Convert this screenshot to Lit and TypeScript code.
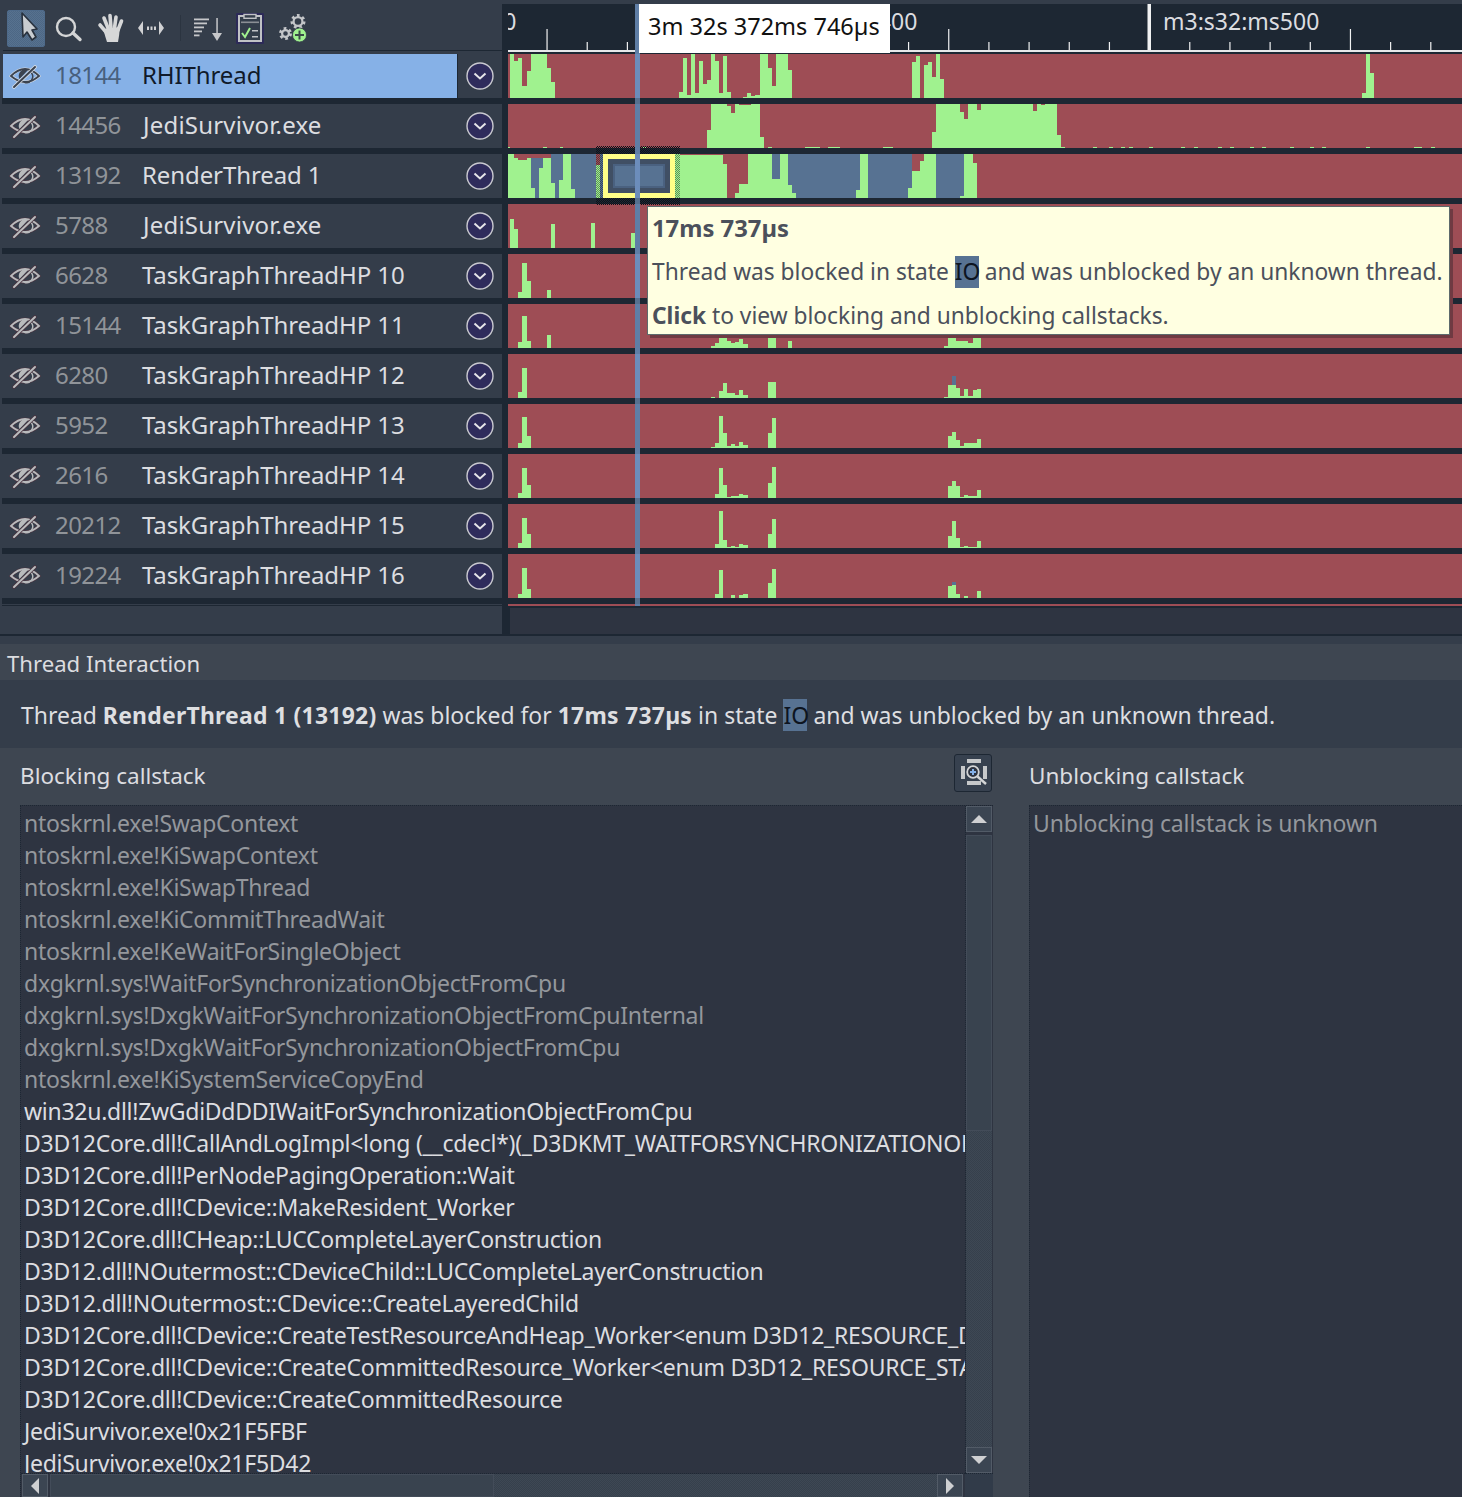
import { LitElement, html, css, svg } from "lit";
import { customElement } from "lit/decorators.js";

const GREEN = "#a0f28f";
const BLUE = "#577292";

// Columns traced from the reference, in 3x-zoom x units: [x0, x1, green, blue?]
type Col = [number, number, number, number?];
const TRACKS: Col[][] = [
  [[30,42,44],[42,54,37],[54,66,40],[66,81,12],[81,93,27],[93,141,44],[141,153,30],[153,165,16],
   [537,549,6],[549,561,40],[561,573,3],[573,585,44],[585,597,5],[597,609,37],[609,621,14],[621,633,18],[633,645,44],[645,657,37],[657,669,5],[669,681,42],[681,693,6],
   [729,741,1],[741,753,5],[753,765,2],[765,780,3],[780,804,44],[804,816,30],[816,828,12],[828,864,44],[864,876,28],
   [1236,1248,36],[1248,1260,42],[1272,1284,33],[1284,1296,36],[1296,1308,21],[1308,1320,44],[1320,1332,19],
   [2586,2598,5],[2598,2610,44],[2610,2622,25]],
  [[24,30,1],[130,140,1],[180,190,1],[425,440,1],[621,633,18],[633,681,44],[681,693,42],[693,705,35],[705,717,44],[717,753,43],[753,780,44],[780,792,11],[805,815,1],[915,960,1],[985,1020,1],[1150,1180,1],
   [1296,1308,16],[1308,1380,44],[1380,1392,36],[1392,1404,29],[1404,1431,44],[1431,1443,38],[1443,1599,44],[1599,1611,37],[1611,1623,44],[1623,1635,43],[1635,1671,44],[1671,1683,13],[1683,1695,1],
   [1779,1791,1],[1827,1839,1],[1863,1875,1],[1887,1899,1],[1947,1959,1],[2043,2055,1],[2082,2094,1],[2154,2166,1],[2190,2202,1],[2250,2262,1],[2286,2298,1],[2370,2382,1],[2430,2442,1],[2466,2478,1],[2598,2610,1],[2742,2766,1],[2793,2805,1]],
  [[24,42,44],[42,54,40],[54,81,38],[81,93,40],[93,105,10,30],[105,117,0,40],[117,129,30,10],[129,153,40],[153,165,15,29],[165,177,0,44],[177,189,18,26],[189,213,44],[213,225,9,35],[225,288,0,44],
   [288,300,33],[300,525,0,44],[525,540,44],[540,669,43],[669,681,34],[705,717,5],[717,744,14],[744,816,44],[816,840,19,25],[840,864,44],[864,876,13,31],[876,888,5,39],[888,1068,0,44],[1068,1080,8,36],[1080,1104,44],[1104,1224,0,44],[1224,1236,10,34],[1236,1260,27],[1260,1272,37],[1272,1308,44],[1308,1380,0,44],[1380,1392,2,42],[1392,1419,44],[1419,1431,35]],
  [[30,42,29],[42,54,19],[153,165,24],[273,285,25],[393,405,15]],
  [[54,66,6],[66,81,35],[81,93,17],[141,153,8]],
  [[54,66,6],[66,81,32],[81,93,7],[141,153,13],[633,645,2],[645,657,5],[657,681,11],[681,693,7],[693,705,5],[705,717,6],[717,729,9],[729,744,4],[804,828,11],[864,876,7],[1332,1344,2],[1344,1368,11],[1368,1392,7],[1392,1404,7],[1404,1419,5],[1419,1443,10]],
  [[54,66,6],[66,81,30],[633,645,1],[657,669,7],[669,681,15],[681,693,5],[693,705,5],[705,717,3],[717,729,8],[729,744,3],[804,828,16],[1332,1344,1],[1344,1356,13],[1356,1368,13,9],[1368,1380,10],[1380,1392,2],[1392,1404,9],[1404,1419,2],[1419,1431,8],[1431,1443,9]],
  [[54,66,5],[66,81,31],[81,93,12],[633,645,1],[645,657,5],[657,669,32],[669,681,15],[681,693,2],[693,705,4],[705,717,2],[717,729,6],[729,744,3],[804,816,15],[816,828,30],[1344,1356,12],[1356,1368,16],[1368,1380,8],[1380,1392,2],[1392,1431,5],[1431,1443,9]],
  [[54,66,5],[66,81,30],[81,93,13],[645,657,4],[657,669,30],[669,681,13],[681,693,1],[693,717,2],[717,729,4],[729,744,3],[804,816,15],[816,828,31],[1344,1356,12],[1356,1368,17],[1368,1380,12],[1380,1392,1],[1392,1404,3],[1404,1431,2],[1431,1443,8]],
  [[54,66,5],[66,81,30],[81,93,14],[645,657,4],[657,669,37],[669,681,8],[681,693,1],[693,705,2],[705,717,1],[717,729,4],[729,744,3],[804,816,14],[816,828,29],[1344,1356,12],[1356,1368,27],[1368,1380,10],[1380,1392,1],[1392,1404,2],[1404,1431,1],[1431,1443,7]],
  [[54,66,4],[66,81,30],[81,93,9],[645,657,4],[657,669,28],[693,705,3],[717,729,3],[729,744,4],[804,816,15],[816,828,29],[1344,1356,12],[1356,1368,13,3],[1368,1380,4],[1392,1404,2],[1431,1443,7]],
];

const THREADS: [string, string][] = [
  ["18144","RHIThread"],["14456","JediSurvivor.exe"],["13192","RenderThread 1"],["5788","JediSurvivor.exe"],
  ["6628","TaskGraphThreadHP 10"],["15144","TaskGraphThreadHP 11"],["6280","TaskGraphThreadHP 12"],["5952","TaskGraphThreadHP 13"],
  ["2616","TaskGraphThreadHP 14"],["20212","TaskGraphThreadHP 15"],["19224","TaskGraphThreadHP 16"],
];

const STACK = [
  "ntoskrnl.exe!SwapContext","ntoskrnl.exe!KiSwapContext","ntoskrnl.exe!KiSwapThread","ntoskrnl.exe!KiCommitThreadWait","ntoskrnl.exe!KeWaitForSingleObject",
  "dxgkrnl.sys!WaitForSynchronizationObjectFromCpu","dxgkrnl.sys!DxgkWaitForSynchronizationObjectFromCpuInternal","dxgkrnl.sys!DxgkWaitForSynchronizationObjectFromCpu","ntoskrnl.exe!KiSystemServiceCopyEnd",
  "win32u.dll!ZwGdiDdDDIWaitForSynchronizationObjectFromCpu",
  "D3D12Core.dll!CallAndLogImpl<long (__cdecl*)(_D3DKMT_WAITFORSYNCHRONIZATIONOBJECTFROMCPU)>",
  "D3D12Core.dll!PerNodePagingOperation::Wait","D3D12Core.dll!CDevice::MakeResident_Worker","D3D12Core.dll!CHeap::LUCCompleteLayerConstruction",
  "D3D12.dll!NOutermost::CDeviceChild::LUCCompleteLayerConstruction","D3D12.dll!NOutermost::CDevice::CreateLayeredChild",
  "D3D12Core.dll!CDevice::CreateTestResourceAndHeap_Worker<enum D3D12_RESOURCE_DIMENSION>",
  "D3D12Core.dll!CDevice::CreateCommittedResource_Worker<enum D3D12_RESOURCE_STATES>",
  "D3D12Core.dll!CDevice::CreateCommittedResource","JediSurvivor.exe!0x21F5FBF","JediSurvivor.exe!0x21F5D42",
];

const icon = (x0: number, w: number, body: unknown) => html`<svg class="ico" width=${w} height="50" viewBox="${x0} 0 ${w} 50">${body}</svg>`;

const gear = (cx: number, cy: number, r: number) => svg`
  <circle cx=${cx} cy=${cy} r=${r} fill="none" stroke="#c4c6c9" stroke-width="3" stroke-dasharray="2.6 2.7"/>
  <circle cx=${cx} cy=${cy} r=${r - 1.6} fill="none" stroke="#c4c6c9" stroke-width="2.2"/>`;

const eye = (sel: boolean) => {
  const c = sel ? "#3b4350" : "#b9bbbd";
  const halo = sel ? "#d8dde4" : "#4a3440";
  return html`<svg class="eye" width="32" height="28" viewBox="9 112 32 28">
    <path d="M11 126 Q25 112 39 126 Q25 138 11 126Z" fill="none" stroke=${halo} stroke-width="3"/>
    <path d="M11 126 Q25 112 39 126 Q25 138 11 126Z" fill="none" stroke=${c} stroke-width="1.8"/>
    <path d="M19.500 129 A7 7 0 0 1 28.500 119.500Z" fill=${c}/>
    <path d="M31 122.500 A6 6 0 0 1 24 132" fill="none" stroke=${c} stroke-width="1.500"/>
    <line x1="14" y1="137" x2="35" y2="117" stroke=${halo} stroke-width="3.600" stroke-linecap="round"/>
    <line x1="14" y1="137" x2="35" y2="117" stroke=${c} stroke-width="2" stroke-linecap="round"/>
  </svg>`;
};

const chevron = html`<svg class="chev" width="28" height="28" viewBox="0 0 28 28">
  <circle cx="14" cy="14" r="13" fill="#2f2c5c" stroke="#c9c9d0" stroke-width="1.4"/>
  <path d="M8.500 11.500 L14 16.500 L19.500 11.500" fill="none" stroke="#e6e6ea" stroke-width="2"/>
</svg>`;

const TICKS = Array.from({ length: 28 }, (_, i) => i);

@customElement("app-root")
export class AppRoot extends LitElement {
  static styles = css`
    :host { display: block; width: 1462px; height: 1497px; overflow: hidden; background: #343d4a;
      font-family: "Noto Sans", "Open Sans", sans-serif; color: #dedfe1; }
    * { box-sizing: border-box; }
    .top { position: relative; display: grid; grid-template-columns: 502px 960px; height: 634px; }
    .side { display: flex; flex-direction: column; padding-left: 2px; }
    .toolbar { display: flex; align-items: center; height: 51px; border-bottom: 1px solid #1d2733; margin-bottom: 3px; margin-left: 1px; padding-left: 4px; }
    .ico { display: block; flex: none; }
    .tool-on { width: 38px; height: 37px; flex: none; border: 1px solid #4e6a8a; border-radius: 2px;
      background: repeating-conic-gradient(#4d6785 0 25%, #57728f 0 50%) 0 0 / 2px 2px; display: flex; margin-top: 7px; }
    .rows { display: flex; flex-direction: column; }
    .row { height: 50px; border-bottom: 6px solid #1d2733; display: flex; align-items: center; background: #343d4a; }
    .main { display: flex; align-items: center; width: 455px; height: 44px; flex: none; font-size: 24px; }
    .row.sel .main { background: #86b1e7; margin-left: 1px; width: 454px; }
    .eyebox { width: 54px; padding-left: 7px; display: flex; flex: none; }
    .row.sel .eyebox { padding-left: 6px; width: 53px; }
    .eye { display: block; }
    .pid { width: 86px; flex: none; color: #909499; letter-spacing: -0.6px; margin-top: -4px; margin-left: -1px; margin-right: 1px; }
    .name { white-space: nowrap; color: #dcdde0; letter-spacing: -0.1px; margin-top: -4px; }
    .name.jedi { letter-spacing: 0.2px; margin-left: 1px; }
    .row.sel .pid { color: #48607e; }
    .row.sel .name { color: #101a2a; }
    .chevbox { flex: 1; display: flex; justify-content: center; padding-right: 1px; border-left: 1px solid transparent; }
    .row.sel .chevbox { border-left-color: #1d2733; height: 44px; align-items: center; }
    .chev { display: block; }
    .sidefoot { flex: 1; border-top: 1px solid #1d2733; margin-top: 1px; }
    .time { background: #1d2733; margin-top: 4px; padding-left: 6px; display: flex; flex-direction: column; height: 630px; }
    .ruler { position: relative; height: 48px; margin-bottom: 2px; overflow: hidden; border-bottom: 2px solid #e6e8ea; flex: none; }
    .ruler svg { display: block; position: absolute; left: 0; top: 0; }
    .rlabel { position: absolute; top: 0; line-height: 35px; font-size: 23px; color: #dcdde0; white-space: nowrap; }
    .tracks { display: flex; flex-direction: column; gap: 6px; }
    .track { display: block; background: #9e4d55; }
    .sliver { height: 2px; margin-top: 6px; background: #9e4d55; flex: none; }
    .tscroll { flex: 1; margin: 2px 0 0 2px; background: #2e3441; }
    .cursor { position: absolute; left: 635px; top: 4px; width: 5px; height: 602px;
      background: repeating-linear-gradient(#5f7ea6 0 50px, #6c8dbb 50px 94px, #56708f 94px 100px); }
    .selbox { position: absolute; left: 603px; top: 154px; width: 72px; height: 44px; border: 5px solid #ffff88;
      box-shadow: inset 0 0 0 5px #404f64, inset 0 0 0 7px #4a6180; }
    .dith { position: absolute; background: repeating-conic-gradient(#0c121a 0 25%, transparent 0 50%) 0 0 / 2px 2px; }
    .d1 { left: 596px; top: 146px; width: 84px; height: 8px; }
    .d2 { left: 596px; top: 198px; width: 84px; height: 7px; }
    .d3 { left: 596px; top: 154px; width: 7px; height: 44px; opacity: .45; }
    .d4 { left: 675px; top: 154px; width: 5px; height: 44px; opacity: .45; }
    .stamp { position: absolute; left: 639px; top: 4px; width: 251px; height: 49px; background: #fff; color: #111; font-size: 23.5px;
      line-height: 45px; padding-left: 9px; white-space: nowrap; }
    .tip { position: absolute; left: 647px; top: 206px; width: 803px; height: 129px; background: #ffffe1; border: 1px solid #5d6a6c;
      box-shadow: 3px 3px 0 #6f3a42; color: #4b505b; font-size: 22.75px; padding-left: 4px; display: flex; flex-direction: column; white-space: nowrap; }
    .tip div { height: 44px; line-height: 44px; }
    .tip .t1 { font-size: 23.8px; line-height: 43px; }
    .state { background: #577292; color: #0d1420; display: inline-block; width: 24px; text-align: center; line-height: 32px; height: 32px; vertical-align: baseline; }
    .rule { height: 2px; background: #1d2733; }
    .band { height: 8px; }
    .head { height: 36px; line-height: 39px; background: #3e4651; padding-left: 7px; font-size: 22.15px; color: #dcdde0; }
    .msg { height: 68px; line-height: 71px; padding-left: 21px; font-size: 22.95px; color: #dedfe1; white-space: nowrap; }
    .msg b { font-weight: 700; letter-spacing: 0.25px; }
    .panel { display: grid; grid-template-columns: 1029px 433px; height: 749px; background: #3e4651; }
    .col { display: flex; flex-direction: column; min-height: 0; }
    .col.l { padding-left: 20px; padding-right: 36px; }
    .title { height: 57px; flex: none; display: flex; justify-content: space-between; font-size: 22.5px; line-height: 55px; color: #dcdde0; }
    .lens { width: 38px; height: 38px; border: 1px solid #1d2733; border-radius: 3px; background: #37414f; margin-top: 6px; margin-right: 1px; display: block; }
    .lens svg { display: block; }
    .list { flex: 1; display: grid; grid-template-columns: minmax(0, 1fr) 28px; grid-template-rows: minmax(0, 1fr) 24px; min-height: 0;
      border-top: 1px dotted #1d2733; border-left: 1px dotted #1d2733; background: #2e3441; }
    .lines { overflow: hidden; padding: 1px 0 0 3px; font-size: 23px; line-height: 32px; white-space: nowrap; color: #dcdde0; min-width: 0; min-height: 0; letter-spacing: -0.27px; }
    .lines .sys { color: #94979c; }
    .lines div { height: 32px; }
    .vs { display: flex; flex-direction: column; border-left: 1px dotted #1d2733; min-height: 0; }
    .sb { border: 1px solid #525b67; background: #3b4552; display: flex; align-items: center; justify-content: center; flex: none; }
    .sb svg { display: block; }
    .vs .sb { height: 26px; margin-right: 1px; }
    .vthumb { height: 296px; margin: 3px 1px 0 0; flex: none; border: 1px solid #434c59; background: #39434f; }
    .track-d { flex: 1; margin-right: 1px; background: repeating-conic-gradient(#36404c 0 25%, #3e4854 0 50%) 0 0 / 2px 2px; }
    .hs { display: flex; border-top: 1px dotted #1d2733; padding-left: 1px; min-width: 0; }
    .hs .sb { width: 26px; }
    .hthumb { width: 444px; margin-left: 2px; flex: none; border: 1px solid #434c59; background: #39434f; }
    .hs .track-d { margin: 0; }
    .hs .sb.r { margin-right: 2px; }
    .corner { background: #313b49; border-top: 1px dotted #1d2733; }
    .rbox { flex: 1; border-top: 1px dotted #1d2733; border-left: 1px dotted #1d2733; background: #2e3441; padding: 1px 0 0 3px;
      font-size: 23px; line-height: 32px; color: #94979c; white-space: nowrap; letter-spacing: -0.15px; }
  `;

  private track(cols: Col[]) {
    const X = (z: number) => z / 3 - 8;
    return html`<svg class="track" width="954" height="44" viewBox="0 0 954 44" shape-rendering="crispEdges">
      ${cols.map(([a, b, g, bl]) => svg`
        ${g ? svg`<rect x=${X(a)} y=${44 - g} width=${(b - a) / 3} height=${g} fill=${GREEN}></rect>` : ""}
        ${bl ? svg`<rect x=${X(a)} y=${44 - g - bl} width=${(b - a) / 3} height=${bl} fill=${BLUE}></rect>` : ""}
      `)}
    </svg>`;
  }

  render() {
    return html`
      <div class="top">
        <div class="side">
          <div class="toolbar">
            <div class="tool-on"><svg class="ico" width="36" height="35" viewBox="8 11 36 35">
              <path d="M22 13 L23 37 L27 32 L32 40 L36 37 L32 30 L37 29Z" fill="#c8ccd0" stroke="#28313d" stroke-width="1.6" stroke-linejoin="round"/></svg></div>
            ${icon(45, 45, svg`<circle cx="66" cy="27" r="9" fill="none" stroke="#d4d5d6" stroke-width="2.4"/><line x1="73" y1="33" x2="80" y2="39.5" stroke="#d4d5d6" stroke-width="3.4" stroke-linecap="round"/>`)}
            ${icon(90, 40, svg`<g stroke="#d6d7d8" stroke-width="3.6" stroke-linecap="round" fill="none">
                <line x1="106" y1="32" x2="100" y2="25"/><line x1="108" y1="28" x2="104" y2="18"/><line x1="111" y1="28" x2="110" y2="15.5"/><line x1="114.5" y1="28" x2="116" y2="17"/><line x1="118" y1="30" x2="121.5" y2="21"/></g>
                <path d="M103 29 L120 27 L119 36 L118 42 L107 42 Z" fill="#d6d7d8"/>`)}
            ${icon(130, 50, svg`<path d="M138 28 L143 21 L143 35Z M164 28 L159 21 L159 35Z" fill="#d0d1d3"/><rect x="147" y="26.500" width="2" height="3.500" fill="#d0d1d3"/><rect x="150.500" y="26.500" width="2" height="3.500" fill="#d0d1d3"/><rect x="154" y="26.500" width="2" height="3.500" fill="#d0d1d3"/>`)}
            ${icon(180, 6, svg`<rect x="180" y="15" width="1" height="26" fill="#2b3440"/>`)}
            ${icon(186, 44, svg`<g fill="#c6c7ca"><rect x="194" y="18.500" width="15" height="1.800"/><rect x="194" y="22.500" width="13" height="1.800"/><rect x="194" y="26.500" width="10" height="1.800"/><rect x="194" y="30.500" width="8" height="1.800"/><rect x="194" y="34.500" width="5.500" height="1.800"/>
               <rect x="216.300" y="18" width="1.500" height="16"/><path d="M212 33 L222 33 L217 41Z"/></g>`)}
            ${icon(230, 44, svg`<rect x="236" y="13" width="28" height="31" rx="1" fill="#2c2a58"/><rect x="239" y="16" width="22" height="25" fill="#333d4a" stroke="#c0c2c5" stroke-width="2"/><rect x="244" y="14.500" width="12" height="3.800" fill="#333d4a" stroke="#c0c2c5" stroke-width="1.400"/>
               <rect x="241" y="21.500" width="18" height="1.600" fill="#8b8f95"/><path d="M242 33 L245 37 L250 28" fill="none" stroke="#a0f28f" stroke-width="2"/><rect x="252" y="30" width="6" height="1.500" fill="#c0c2c5"/><rect x="252" y="36" width="6" height="1.500" fill="#c0c2c5"/>`)}
            ${icon(274, 36, svg`${gear(298, 21.500, 6)}${gear(285.500, 33.500, 5)}<circle cx="299.500" cy="35" r="7" fill="#a0f28f" stroke="#343d4a" stroke-width="0.800"/><path d="M299.500 30.500 V39.500 M295 35 H304" stroke="#3a4a48" stroke-width="2"/>`)}
          </div>
          <div class="rows">
            ${THREADS.map(([pid, name], i) => html`<div class="row ${i === 0 ? "sel" : ""}">
              <div class="main"><div class="eyebox">${eye(i === 0)}</div><div class="pid">${pid}</div><div class="name ${name.startsWith("Jedi") ? "jedi" : ""}">${name}</div></div>
              <div class="chevbox">${chevron}</div></div>`)}
          </div>
          <div class="sidefoot"></div>
        </div>
        <div class="time">
          <div class="ruler">
            <svg width="954" height="46" viewBox="508 4 954 46">
              ${TICKS.map((n) => {
                const x = 345.6 + n * 40.17;
                if (n % 10 === 0) return svg`<rect x=${x - 1.500} y="4" width="3.500" height="46" fill="#f0f1f2"></rect>`;
                return svg`<rect x=${x} y=${n % 5 === 0 ? 29 : 42} width="1.200" height=${n % 5 === 0 ? 21 : 8} fill="#f0f1f2"></rect>`;
              })}
            </svg>
            <span class="rlabel" style="left:${360 - 508}px">m3:s32:ms300</span>
            <span class="rlabel" style="left:${761 - 508}px">m3:s32:ms400</span>
            <span class="rlabel" style="left:${1163 - 508}px">m3:s32:ms500</span>
          </div>
          <div class="tracks">${TRACKS.map((t) => this.track(t))}</div>
          <div class="sliver"></div>
          <div class="tscroll"></div>
        </div>
        <div class="dith d1"></div><div class="dith d2"></div><div class="dith d3"></div><div class="dith d4"></div>
        <div class="selbox"></div>
        <div class="cursor"></div>
        <div class="stamp">3m 32s 372ms 746µs</div>
        <div class="tip">
          <div class="t1"><b>17ms 737µs</b></div>
          <div>Thread was blocked in state <span class="state">IO</span> and was unblocked by an unknown thread.</div>
          <div><b>Click</b> to view blocking and unblocking callstacks.</div>
        </div>
      </div>
      <div class="rule"></div>
      <div class="band"></div>
      <div class="head">Thread Interaction</div>
      <div class="msg">Thread <b>RenderThread 1 (13192)</b> was blocked for <b>17ms 737µs</b> in state <span class="state">IO</span> and was unblocked by an unknown thread.</div>
      <div class="panel">
        <div class="col l">
          <div class="title"><span>Blocking callstack</span>
            <div class="lens"><svg width="36" height="36" viewBox="955 755 36 36">
              <g fill="#c6c8ca"><rect x="967" y="759" width="14" height="4"/><rect x="967" y="781" width="14" height="4"/><rect x="961" y="766" width="4" height="13"/><rect x="983" y="766" width="4" height="13"/></g>
              <circle cx="973" cy="772" r="5.800" fill="#2e3441" stroke="#d4d5d6" stroke-width="1.800"/><path d="M973 769 V775 M970 772 H976" stroke="#86b1e7" stroke-width="2"/><line x1="977.500" y1="776.500" x2="986" y2="784" stroke="#d4d5d6" stroke-width="2.400"/></svg></div>
          </div>
          <div class="list">
            <div class="lines">${STACK.map((s, i) => html`<div class=${i < 9 ? "sys" : ""}>${s}</div>`)}</div>
            <div class="vs">
              <div class="sb"><svg width="16" height="8" viewBox="0 0 16 8"><path d="M8 0 L16 8 L0 8Z" fill="#cfd0d2"/></svg></div>
              <div class="vthumb"></div>
              <div class="track-d"></div>
              <div class="sb"><svg width="16" height="8" viewBox="0 0 16 8"><path d="M8 8 L16 0 L0 0Z" fill="#cfd0d2"/></svg></div>
            </div>
            <div class="hs">
              <div class="sb"><svg width="8" height="16" viewBox="0 0 8 16"><path d="M0 8 L8 0 L8 16Z" fill="#cfd0d2"/></svg></div>
              <div class="hthumb"></div>
              <div class="track-d"></div>
              <div class="sb r"><svg width="8" height="16" viewBox="0 0 8 16"><path d="M8 8 L0 0 L0 16Z" fill="#cfd0d2"/></svg></div>
            </div>
            <div class="corner"></div>
          </div>
        </div>
        <div class="col">
          <div class="title"><span>Unblocking callstack</span></div>
          <div class="rbox">Unblocking callstack is unknown</div>
        </div>
      </div>
    `;
  }
}
